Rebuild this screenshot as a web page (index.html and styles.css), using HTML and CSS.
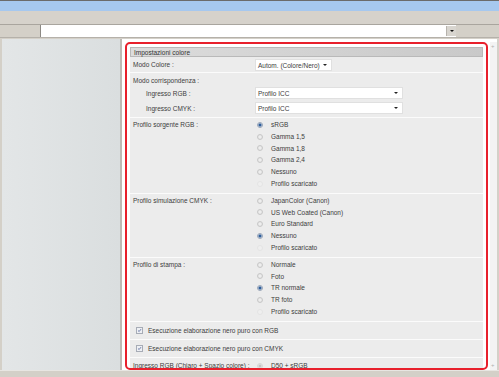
FILE: index.html
```html
<!DOCTYPE html>
<html lang="it">
<head>
<meta charset="utf-8">
<title>Impostazioni colore</title>
<link rel="stylesheet" href="styles.css">
</head>
<body>
<div class="window">
  <div class="titlebar"></div>
  <div class="toolbar"></div>
  <div class="addressrow">
    <div class="addr-label"></div>
    <div class="addr-input"><span class="addr-btn"><span class="tri"></span></span></div>
    <div class="addr-rest"></div>
  </div>
  <div class="main">
    <div class="leftpane"></div>
    <div class="rightpane">
      <div class="frame">
        <div class="panel">
          <div class="panel-head">Impostazioni colore</div>
          <div class="row row-mode">
            <div class="lbl">Modo Colore :</div>
            <div class="val"><span class="select sel-short">Autom. (Colore/Nero)<span class="arrow"></span></span></div>
          </div>
          <div class="row group-corr">
            <div class="corr-title">Modo corrispondenza :</div>
            <div class="corr-line">
              <div class="lbl sub">Ingresso RGB :</div>
              <div class="val"><span class="select sel-long">Profilo ICC<span class="arrow"></span></span></div>
            </div>
            <div class="corr-line">
              <div class="lbl sub">Ingresso CMYK :</div>
              <div class="val"><span class="select sel-long">Profilo ICC<span class="arrow"></span></span></div>
            </div>
          </div>
          <div class="row radios-row">
            <div class="lbl">Profilo sorgente RGB :</div>
            <div class="val radios">
              <div class="opt"><span class="radio on"></span>sRGB</div>
              <div class="opt"><span class="radio"></span>Gamma 1,5</div>
              <div class="opt"><span class="radio"></span>Gamma 1,8</div>
              <div class="opt"><span class="radio"></span>Gamma 2,4</div>
              <div class="opt"><span class="radio"></span>Nessuno</div>
              <div class="opt"><span class="radio off"></span>Profilo scaricato</div>
            </div>
          </div>
          <div class="row radios-row">
            <div class="lbl">Profilo simulazione CMYK :</div>
            <div class="val radios">
              <div class="opt"><span class="radio"></span>JapanColor (Canon)</div>
              <div class="opt"><span class="radio"></span>US Web Coated (Canon)</div>
              <div class="opt"><span class="radio"></span>Euro Standard</div>
              <div class="opt"><span class="radio on"></span>Nessuno</div>
              <div class="opt"><span class="radio off"></span>Profilo scaricato</div>
            </div>
          </div>
          <div class="row radios-row">
            <div class="lbl">Profilo di stampa :</div>
            <div class="val radios">
              <div class="opt"><span class="radio"></span>Normale</div>
              <div class="opt"><span class="radio"></span>Foto</div>
              <div class="opt"><span class="radio on"></span>TR normale</div>
              <div class="opt"><span class="radio"></span>TR foto</div>
              <div class="opt"><span class="radio off"></span>Profilo scaricato</div>
            </div>
          </div>
          <div class="row cb-row"><span class="checkbox"><svg viewBox="0 0 7 7" width="7" height="7"><path d="M1.5 3.5 L3 5 L5.6 1.6" fill="none" stroke="#3b4f8c" stroke-width="1"/></svg></span>Esecuzione elaborazione nero puro con RGB</div>
          <div class="row cb-row"><span class="checkbox"><svg viewBox="0 0 7 7" width="7" height="7"><path d="M1.5 3.5 L3 5 L5.6 1.6" fill="none" stroke="#3b4f8c" stroke-width="1"/></svg></span>Esecuzione elaborazione nero puro con CMYK</div>
          <div class="row last-row">
            <div class="lbl">Ingresso RGB (Chiaro + Spazio colore) :</div>
            <div class="val"><div class="opt"><span class="radio dis"></span>D50 + sRGB</div></div>
          </div>
        </div>
      </div>
      <div class="scrollbar"><span class="sb-up">+</span><span class="sb-down">+</span></div>
    </div>
  </div>
  <div class="statusbar"></div>
</div>
</body>
</html>
```
FILE: styles.css
```css
html, body {
  margin: 0;
  padding: 0;
  background: #d4d0c8;
}
body {
  width: 499px;
  height: 377px;
  overflow: hidden;
  font-family: "Liberation Sans", Arial, sans-serif;
  font-size: 6.5px;
  color: #3c3c3c;
}
.window {
  width: 499px;
  height: 377px;
  display: flex;
  flex-direction: column;
  background: #d4d0c8;
}
.titlebar {
  height: 10px;
  border-top: 1px solid #6b6b6b;
  background: #a6c8ef;
}
.toolbar {
  height: 13px;
  background: #d6d2cb;
  border-bottom: 1px solid #a9a59e;
}
.addressrow {
  height: 12px;
  display: flex;
  background: #d4d0c8;
  border-bottom: 1px solid #b5b1aa;
}
.addr-label {
  width: 40px;
  border-right: 1px solid #8c8984;
}
.addr-input {
  width: 415px;
  background: #fff;
  display: flex;
  justify-content: flex-end;
  padding: 1px 0;
  box-sizing: border-box;
}
.addr-btn {
  width: 9px;
  height: 10px;
  background: #d8d5cf;
  border-left: 1px solid #b7b3ad;
  display: flex;
  align-items: center;
  justify-content: center;
}
.tri {
  width: 0;
  height: 0;
  border-left: 2px solid transparent;
  border-right: 2px solid transparent;
  border-top: 2px solid #111;
}
.addr-rest { flex: 1; }
.main {
  flex: 1;
  display: flex;
  padding: 1px 2px 0 2px;
  min-height: 0;
}
.leftpane {
  width: 118px;
  background: linear-gradient(to right, #e3e6e7, #dadedf);
  border-right: 2px solid #bdbab5;
}
.rightpane {
  flex: 1;
  display: flex;
  background: #fff;
  padding: 3px 0 0 3px;
  min-width: 0;
}
.frame {
  width: 363px;
  height: 328px;
  box-sizing: border-box;
  border: 2px solid #e8202c;
  border-radius: 5px;
  padding: 3px 3px 0 3px;
  overflow: hidden;
  background: #fff;
}
.panel {
  background: #ececec;
}
.panel-head {
  height: 10px;
  line-height: 9px;
  padding-left: 3px;
  background: linear-gradient(to right, #dcdcdc, #c9c9c9);
  border: 1px solid #b9b9b9;
  box-sizing: border-box;
  color: #333;
}
.row {
  display: flex;
  border-bottom: 1px solid #fbfbfb;
  white-space: nowrap;
}
.lbl {
  width: 122px;
  padding-left: 3px;
  flex: none;
}
.lbl.sub {
  padding-left: 16px;
  width: 109px;
}
.val { flex: 1; }
.row-mode {
  height: 15px;
  align-items: center;
}
.select {
  position: relative;
  display: inline-block;
  height: 12px;
  line-height: 11px;
  box-sizing: border-box;
  background: #fff;
  border: 1px solid #e0e0e0;
  padding-left: 2px;
  vertical-align: middle;
}
.sel-short { width: 77px; }
.sel-long { width: 148px; }
.arrow {
  position: absolute;
  right: 4px;
  top: 4px;
  border-left: 2px solid transparent;
  border-right: 2px solid transparent;
  border-top: 2px solid #222;
}
.group-corr {
  flex-direction: column;
  height: 45px;
  box-sizing: border-box;
  padding-top: 3px;
}
.corr-title {
  height: 10px;
  line-height: 10px;
  padding-left: 3px;
  margin-bottom: 1px;
}
.corr-line {
  display: flex;
  height: 13px;
  align-items: center;
  margin-bottom: 3px;
}
.radios-row {
  padding: 1px 0 3px 0;
}
.radios-row .lbl {
  line-height: 11.8px;
}
.opt {
  height: 11.8px;
  line-height: 11.8px;
  display: flex;
  align-items: center;
  padding-left: 2px;
}
.radio {
  width: 6px;
  height: 6px;
  border-radius: 50%;
  box-sizing: border-box;
  border: 1px solid #c8c8c8;
  background: radial-gradient(circle, #f4f4f4, #dcdcdc);
  margin-right: 8px;
  flex: none;
}
.radio.on {
  border-color: #9aa6b8;
  background: radial-gradient(circle, #2f5e9a 0, #2f5e9a 1.3px, #cfd8e4 1.8px);
}
.radio.off {
  border-color: #e4e4e4;
  background: #efefef;
}
.radio.dis {
  border-color: #d6d6d6;
  background: radial-gradient(circle, #c4c4c4 0, #c4c4c4 1.2px, #e6e6e6 1.8px);
}
.cb-row {
  height: 17px;
  align-items: center;
  padding-left: 6px;
}
.checkbox {
  width: 7px;
  height: 7px;
  box-sizing: border-box;
  border: 1px solid #a7acb6;
  background: #eef0f4;
  margin-right: 5px;
  display: flex;
  align-items: center;
  justify-content: center;
}
.checkbox svg { display: block; }
.last-row {
  height: 16px;
  align-items: center;
  border-bottom: none;
}
.scrollbar {
  width: 7px;
  margin-left: 2px;
  background: #f3f3f3;
  position: relative;
  color: #b0b0b0;
  font-size: 6px;
}
.sb-up, .sb-down {
  position: absolute;
  left: 1px;
  line-height: 6px;
}
.sb-up { top: 1px; }
.sb-down { bottom: 2px; }
.statusbar {
  height: 6px;
  border-top: 1px solid #e8e6e2;
  background: #d4d0c8;
}
```
